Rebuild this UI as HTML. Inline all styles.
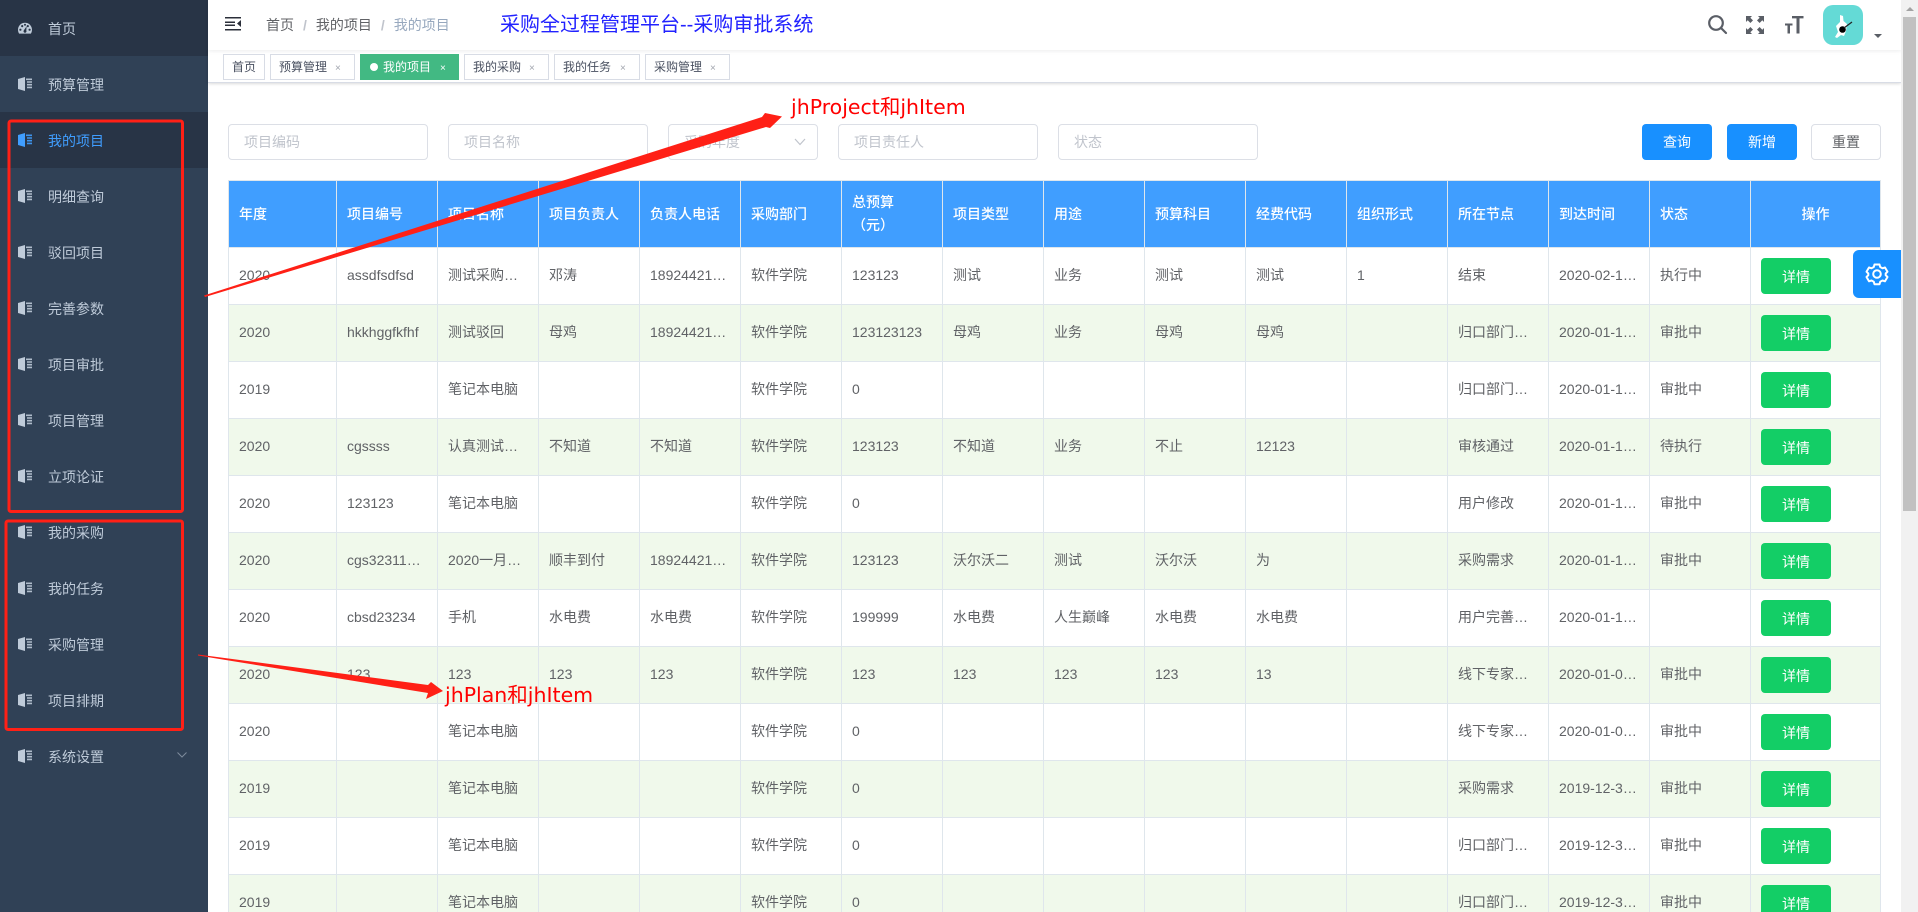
<!DOCTYPE html>
<html lang="zh-CN"><head><meta charset="utf-8"><title>采购审批系统</title>
<style>
*{box-sizing:border-box}
html,body{margin:0;padding:0;width:1918px;height:912px;overflow:hidden;background:#fff}
body{position:relative;font-family:"Liberation Sans","Noto Sans CJK SC",sans-serif;font-size:14px;color:#606266}
.abs{position:absolute}
#side{position:absolute;left:0;top:0;width:208px;height:912px;background:#304156}
#side div{position:relative;height:56px;line-height:59px;padding-left:48px;color:#bfcbd9;font-size:14px}
#side div.d{background:#283446}
#side div.a{color:#409eff}
#side svg{position:absolute;left:18px;top:21px;width:14px;height:14px;fill:currentColor}
#hd{position:absolute;left:208px;top:0;width:1693px;height:50px;background:#fff;box-shadow:0 1px 4px rgba(0,21,41,.08);z-index:2}
#bc{position:absolute;left:266px;top:14px;line-height:22px;font-size:14px;color:#606266;z-index:3;white-space:nowrap}
#bc i{font-style:normal;color:#c0c4cc;font-weight:bold;margin:0 9px}
#bc b{font-weight:normal;color:#97a8be}
#title{position:absolute;left:500px;top:10px;line-height:30px;font-size:20px;color:#2222ff;z-index:3;white-space:nowrap}
#tags{position:absolute;left:208px;top:50px;width:1693px;height:33px;background:#fff;border-bottom:1px solid #d8dce5;box-shadow:0 1px 3px rgba(0,0,0,.12),0 0 3px rgba(0,0,0,.04);z-index:1}
.t{position:absolute;top:54px;height:26px;line-height:25px;border:1px solid #d8dce5;background:#fff;color:#495060;font-size:12px;padding-left:8px;z-index:3;white-space:nowrap}
.t u{position:absolute;text-decoration:none;top:1px;font-size:10px;color:#a0a4ad}
.t.on{background:#42b983;border-color:#42b983;color:#fff;padding-left:22px}
.t.on u{color:#fff}
.t.on s{position:absolute;left:9px;top:8px;width:8px;height:8px;border-radius:50%;background:#fff}
.in{position:absolute;top:124px;height:36px;line-height:34px;border:1px solid #dcdfe6;border-radius:4px;background:#fff;color:#c0c4cc;font-size:14px;padding-left:15px}
.bt{position:absolute;top:124px;width:70px;height:36px;line-height:36px;text-align:center;border-radius:4px;background:#1890ff;color:#fff;font-size:14px}
table{position:absolute;left:228px;top:180px;width:1653px;table-layout:fixed;border-collapse:separate;border-spacing:0;font-size:14px;border-top:1px solid #dfe6ec}
th,td{border-right:1px solid #dfe6ec;border-bottom:1px solid #dfe6ec;padding:0 10px;white-space:nowrap;overflow:hidden;text-overflow:ellipsis;text-align:left}
th:first-child,td:first-child{border-left:1px solid #dfe6ec}
th{height:67px;background:#409eff;color:#fff;font-weight:500;line-height:23px;white-space:normal}
td{height:57px;line-height:22px;color:#606266;padding-bottom:2px}
tr:nth-child(even) td{background:#f0f9eb}
td:last-child{overflow:visible;padding-bottom:0}
td span{display:block;width:70px;height:36px;line-height:38px;background:#13ce66;color:#fff;text-align:center;border-radius:4px;margin-top:-1px}
#gear{position:absolute;left:1853px;top:250px;width:48px;height:48px;background:#1890ff;border-radius:6px 0 0 6px;z-index:4}
#sb{position:absolute;left:1901px;top:0;width:17px;height:912px;background:#f1f1f1;z-index:5}
#sb b{position:absolute;left:2px;top:17px;width:13px;height:494px;background:#c1c1c1}
#sb i{position:absolute;left:5px;top:7px;border-left:4px solid transparent;border-right:4px solid transparent;border-bottom:4px solid #a3a3a3}
.lab{position:absolute;font-family:"DejaVu Sans","Noto Sans CJK SC",sans-serif;font-size:20.5px;line-height:28px;color:#f00;white-space:nowrap;z-index:7}
</style></head><body>

<svg width="0" height="0" style="position:absolute"><defs>
<symbol id="b" viewBox="0 0 14 14"><path d="M0 2L7 0V14L0 12Z"/><path d="M8 1.500H14V3.100H8ZM9 4.200H14V5.800H9ZM9 6.900H14V8.500H9ZM9 9.600H14V11.200H9Z" opacity=".9"/></symbol>
</defs></svg>

<div id="side">
<div class="d">首页<svg viewBox="0 0 14 14" style="top:22px"><path fill-rule="evenodd" d="M7 .8C3.100.8 0 3.900 0 7.800c0 1.400.4 2.700 1.100 3.800h11.800C13.600 10.500 14 9.200 14 7.800 14 3.900 10.900.8 7 .8zM2.400 8.800a1.100 1.100 0 1 1 0-2.200 1.100 1.100 0 0 1 0 2.200zM4.200 5.200a1.100 1.100 0 1 1 0-2.200 1.100 1.100 0 0 1 0 2.200zM7 3.800a1 1 0 1 1 0-2 1 1 0 0 1 0 2zM8.300 8.500a1.500 1.500 0 1 1-2.600 0L8.600 4.200zM9.800 5.200a1.100 1.100 0 1 1 0-2.200 1.100 1.100 0 0 1 0 2.200zM11.600 8.800a1.100 1.100 0 1 1 0-2.200 1.100 1.100 0 0 1 0 2.200z"/></svg></div>
<div>预算管理<svg><use href="#b"/></svg></div>
<div class="d a">我的项目<svg><use href="#b"/></svg></div>
<div>明细查询<svg><use href="#b"/></svg></div>
<div>驳回项目<svg><use href="#b"/></svg></div>
<div>完善参数<svg><use href="#b"/></svg></div>
<div>项目审批<svg><use href="#b"/></svg></div>
<div>项目管理<svg><use href="#b"/></svg></div>
<div>立项论证<svg><use href="#b"/></svg></div>
<div>我的采购<svg><use href="#b"/></svg></div>
<div>我的任务<svg><use href="#b"/></svg></div>
<div>采购管理<svg><use href="#b"/></svg></div>
<div>项目排期<svg><use href="#b"/></svg></div>
<div>系统设置<svg><use href="#b"/></svg><svg viewBox="0 0 10 6" style="left:177px;top:24px;width:10px;height:6px;fill:none;stroke:#7d8b9c;stroke-width:1"><path d="M.5.5L5 5 9.500.5"/></svg></div>
</div>

<div id="hd"></div>
<svg class="abs" style="left:225px;top:16px;z-index:3" width="17" height="15" viewBox="0 0 17 15"><path fill="#2b2f3a" d="M0 1H16V2.500H0ZM0 5.500H10V7H0ZM0 8.500H10V10H0ZM0 13H16V14.500H0ZM16 4V11L12 7.500Z"/></svg>
<div id="bc">首页<i>/</i>我的项目<i>/</i><b>我的项目</b></div>
<div id="title">采购全过程管理平台--采购审批系统</div>

<svg class="abs" style="left:1706px;top:13px;z-index:3" width="22" height="22" viewBox="0 0 22 22" fill="none" stroke="#5a5e66" stroke-width="2.200"><circle cx="10" cy="10" r="6.800"/><path d="M15 15L20 20" stroke-linecap="round"/></svg>
<svg class="abs" style="left:1746px;top:16px;z-index:3" width="18" height="18" viewBox="0 0 18 18" fill="#5a5e66"><path d="M0 0H6L4.300 1.700 7 4.400 4.400 7 1.700 4.300 0 6ZM18 0V6L16.300 4.300 13.600 7 11 4.400 13.700 1.700 12 0ZM0 18V12L1.700 13.700 4.400 11 7 13.600 4.300 16.300 6 18ZM18 18H12L13.700 16.300 11 13.600 13.600 11 16.300 13.700 18 12Z"/></svg>
<svg class="abs" style="left:1785px;top:16px;z-index:3" width="19" height="18" viewBox="0 0 19 18" fill="#5a5e66"><path d="M7 0H18.500V2.400H14.500V17.500H11.500V2.400H7ZM0 7.500H7.500V9.500H5V17.500H2.500V9.500H0Z"/></svg>
<div class="abs" style="left:1823px;top:5px;width:40px;height:40px;border-radius:10px;background:#64dad6;z-index:3"></div>
<svg class="abs" style="left:1823px;top:5px;z-index:3" width="40" height="40" viewBox="0 0 40 40"><path fill="#fff" d="M17 10L20 11 20.500 16 24 19 23 26 21 31 18 30 14 33 12 32 15 27 13 21 17 17Z"/><circle cx="19.500" cy="24.500" r="3.300" fill="#000"/><path d="M21 23L29 17" stroke="#222" stroke-width="1.200"/></svg>
<div class="abs" style="left:1874px;top:34px;border-left:4px solid transparent;border-right:4px solid transparent;border-top:4px solid #5a5e66;z-index:3"></div>

<div id="tags"></div>
<div class="t" style="left:223px;width:42px;padding-left:8px">首页</div>
<div class="t" style="left:270px;width:85px">预算管理<u style="left:64px">×</u></div>
<div class="t on" style="left:360px;width:99px"><s></s>我的项目<u style="left:79px">×</u></div>
<div class="t" style="left:464px;width:85px">我的采购<u style="left:64px">×</u></div>
<div class="t" style="left:554px;width:86px">我的任务<u style="left:65px">×</u></div>
<div class="t" style="left:645px;width:85px">采购管理<u style="left:64px">×</u></div>

<div class="in" style="left:228px;width:200px">项目编码</div>
<div class="in" style="left:448px;width:200px">项目名称</div>
<div class="in" style="left:668px;width:150px">采购年度<svg class="abs" style="left:125px;top:13px" width="12" height="8" viewBox="0 0 12 8" fill="none" stroke="#c0c4cc" stroke-width="1.200"><path d="M1 1L6 6.500 11 1"/></svg></div>
<div class="in" style="left:838px;width:200px">项目责任人</div>
<div class="in" style="left:1058px;width:200px">状态</div>
<div class="bt" style="left:1642px">查询</div>
<div class="bt" style="left:1727px">新增</div>
<div class="bt" style="left:1811px;background:#fff;color:#606266;border:1px solid #dcdfe6;line-height:34px">重置</div>

<table>
<colgroup><col style="width:109px"><col style="width:101px"><col style="width:101px"><col style="width:101px"><col style="width:101px"><col style="width:101px"><col style="width:101px"><col style="width:101px"><col style="width:101px"><col style="width:101px"><col style="width:101px"><col style="width:101px"><col style="width:101px"><col style="width:101px"><col style="width:101px"><col style="width:130px"></colgroup>
<thead><tr><th>年度</th><th>项目编号</th><th>项目名称</th><th>项目负责人</th><th>负责人电话</th><th>采购部门</th><th>总预算<br>（元）</th><th>项目类型</th><th>用途</th><th>预算科目</th><th>经费代码</th><th>组织形式</th><th>所在节点</th><th>到达时间</th><th>状态</th><th style="text-align:center">操作</th></tr></thead>
<tbody>
<tr><td>2020</td><td>assdfsdfsd</td><td>测试采购项目名称</td><td>邓涛</td><td>18924421234</td><td>软件学院</td><td>123123</td><td>测试</td><td>业务</td><td>测试</td><td>测试</td><td>1</td><td>结束</td><td>2020-02-12 10:00</td><td>执行中</td><td><span>详情</span></td></tr>
<tr><td>2020</td><td>hkkhggfkfhf</td><td>测试驳回</td><td>母鸡</td><td>18924421234</td><td>软件学院</td><td>123123123</td><td>母鸡</td><td>业务</td><td>母鸡</td><td>母鸡</td><td></td><td>归口部门审批</td><td>2020-01-16 10:00</td><td>审批中</td><td><span>详情</span></td></tr>
<tr><td>2019</td><td></td><td>笔记本电脑</td><td></td><td></td><td>软件学院</td><td>0</td><td></td><td></td><td></td><td></td><td></td><td>归口部门审批</td><td>2020-01-16 10:00</td><td>审批中</td><td><span>详情</span></td></tr>
<tr><td>2020</td><td>cgssss</td><td>认真测试项目名称</td><td>不知道</td><td>不知道</td><td>软件学院</td><td>123123</td><td>不知道</td><td>业务</td><td>不止</td><td>12123</td><td></td><td>审核通过</td><td>2020-01-16 10:00</td><td>待执行</td><td><span>详情</span></td></tr>
<tr><td>2020</td><td>123123</td><td>笔记本电脑</td><td></td><td></td><td>软件学院</td><td>0</td><td></td><td></td><td></td><td></td><td></td><td>用户修改</td><td>2020-01-15 10:00</td><td>审批中</td><td><span>详情</span></td></tr>
<tr><td>2020</td><td>cgs3231123123</td><td>2020一月份采购</td><td>顺丰到付</td><td>18924421234</td><td>软件学院</td><td>123123</td><td>沃尔沃二</td><td>测试</td><td>沃尔沃</td><td>为</td><td></td><td>采购需求</td><td>2020-01-14 10:00</td><td>审批中</td><td><span>详情</span></td></tr>
<tr><td>2020</td><td>cbsd23234</td><td>手机</td><td>水电费</td><td>水电费</td><td>软件学院</td><td>199999</td><td>水电费</td><td>人生巅峰</td><td>水电费</td><td>水电费</td><td></td><td>用户完善参数</td><td>2020-01-13 10:00</td><td></td><td><span>详情</span></td></tr>
<tr><td>2020</td><td>123</td><td>123</td><td>123</td><td>123</td><td>软件学院</td><td>123</td><td>123</td><td>123</td><td>123</td><td>13</td><td></td><td>线下专家评审</td><td>2020-01-08 10:00</td><td>审批中</td><td><span>详情</span></td></tr>
<tr><td>2020</td><td></td><td>笔记本电脑</td><td></td><td></td><td>软件学院</td><td>0</td><td></td><td></td><td></td><td></td><td></td><td>线下专家评审</td><td>2020-01-06 10:00</td><td>审批中</td><td><span>详情</span></td></tr>
<tr><td>2019</td><td></td><td>笔记本电脑</td><td></td><td></td><td>软件学院</td><td>0</td><td></td><td></td><td></td><td></td><td></td><td>采购需求</td><td>2019-12-31 10:00</td><td>审批中</td><td><span>详情</span></td></tr>
<tr><td>2019</td><td></td><td>笔记本电脑</td><td></td><td></td><td>软件学院</td><td>0</td><td></td><td></td><td></td><td></td><td></td><td>归口部门审批</td><td>2019-12-31 10:00</td><td>审批中</td><td><span>详情</span></td></tr>
<tr><td>2019</td><td></td><td>笔记本电脑</td><td></td><td></td><td>软件学院</td><td>0</td><td></td><td></td><td></td><td></td><td></td><td>归口部门审批</td><td>2019-12-30 10:00</td><td>审批中</td><td><span>详情</span></td></tr>
</tbody></table>

<div id="gear"><svg width="48" height="48" viewBox="0 0 48 48" fill="none" stroke="#fff"><circle cx="24" cy="24" r="3.800" stroke-width="2"/><path stroke-width="2" stroke-linejoin="round" d="M21.500 14.500H26.500L27.200 17 29.500 18.300 32 17.500 34.500 21.700 32.700 23.500V25.200L34.500 27 32 31.300 29.500 30.500 27.200 31.800 26.500 34.200H21.500L20.800 31.800 18.500 30.500 16 31.300 13.500 27 15.300 25.200V23.500L13.500 21.700 16 17.500 18.500 18.300 20.800 17Z"/></svg></div>
<div id="sb"><i></i><b></b></div>

<svg class="abs" style="left:0;top:0;z-index:6" width="1918" height="912" viewBox="0 0 1918 912" fill="none">
<rect x="9" y="121" width="173.500" height="390.500" rx="2" stroke="#ff2016" stroke-width="3"/>
<rect x="6" y="521" width="176.500" height="208.500" rx="2" stroke="#ff2016" stroke-width="3"/>
<path fill="#ff2016" d="M204 295.500L762 117 765 113 782 116.500 770 128 766 127 205 297Z"/>
<path fill="#ff2016" d="M198 654.500L428 685 431 682 443 691 426 699 428 693 198 655.500Z"/>
</svg>
<div class="lab" style="left:791px;top:93px">jhProject和jhItem</div>
<div class="lab" style="left:445px;top:681px">jhPlan和jhItem</div>
</body></html>
